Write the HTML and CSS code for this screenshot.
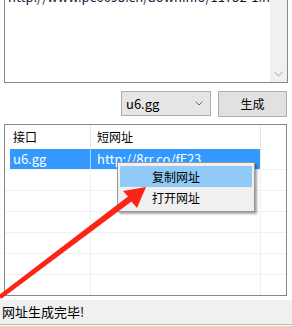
FILE: index.html
```html
<!DOCTYPE html>
<html lang="zh-CN">
<head>
  <meta charset="UTF-8">
  <meta name="viewport" content="width=device-width, initial-scale=1.0">
  <title>短网址生成</title>
  <link rel="stylesheet" href="styles.css">
</head>
<body>
  <div class="window">
    <!-- 长网址输入框 -->
    <div class="input-box">
      <div class="input-text">http://www.pc6693.cn/downinfo/11752-1.html</div>
      <div class="scrollbar">
        <div class="scroll-btn">
          <svg width="9" height="6" viewBox="0 0 9 6"><path d="M0.5 5 L4.5 1 L8.5 5" fill="none" stroke="#c2c2c2" stroke-width="1.2"/></svg>
        </div>
        <div class="scroll-btn">
          <svg width="9" height="6" viewBox="0 0 9 6"><path d="M0.5 1 L4.5 5 L8.5 1" fill="none" stroke="#c2c2c2" stroke-width="1.2"/></svg>
        </div>
      </div>
    </div>

    <!-- 接口选择 + 生成按钮 -->
    <div class="toolbar">
      <div class="combo">
        <span>u6.gg</span>
        <svg width="8" height="5" viewBox="0 0 8 5"><path d="M0.5 0.5 L4 4 L7.5 0.5" fill="none" stroke="#6d6d6d" stroke-width="1"/></svg>
      </div>
      <div class="button">生成</div>
    </div>

    <!-- 结果列表 -->
    <div class="list">
      <div class="list-header">
        <div class="cell c1">接口</div>
        <div class="cell c2">短网址</div>
        <div class="cell c3"></div>
      </div>
      <div class="row selected">
        <div class="cell c1">u6.gg</div>
        <div class="cell c2">http://8rr.co/fF23</div>
        <div class="cell c3"></div>
      </div>
      <div class="row"><div class="cell c1"></div><div class="cell c2"></div><div class="cell c3"></div></div>
      <div class="row"><div class="cell c1"></div><div class="cell c2"></div><div class="cell c3"></div></div>
      <div class="row"><div class="cell c1"></div><div class="cell c2"></div><div class="cell c3"></div></div>
      <div class="row"><div class="cell c1"></div><div class="cell c2"></div><div class="cell c3"></div></div>
      <div class="row"><div class="cell c1"></div><div class="cell c2"></div><div class="cell c3"></div></div>
      <div class="row"><div class="cell c1"></div><div class="cell c2"></div><div class="cell c3"></div></div>

      <!-- 右键菜单 -->
      <div class="context-menu">
        <div class="menu-item active">复制网址</div>
        <div class="menu-item">打开网址</div>
      </div>
    </div>

    <!-- 状态栏 -->
    <div class="status-bar">网址生成完毕!</div>

    <!-- 标注箭头 -->
    <svg class="arrow" width="292" height="326" viewBox="0 0 292 326">
      <polygon points="146,187 123,191 128,196.5 -1,295 1,299 131.5,201.5 137,208" fill="#fb2416"/>
    </svg>
  </div>
</body>
</html>
```

FILE: styles.css
```css
/* 基本样式 */
body {
  margin: 0;
  padding: 0;
  background-color: #FFF;
  font-family: "Noto Sans CJK SC", "Microsoft YaHei", sans-serif;
  font-size: 12px;
  color: #000;
  overflow: hidden;
}

.window {
  position: relative;
  width: 292px;
  height: 326px;
  overflow: hidden;
}

/* 输入框 */
.input-box {
  margin: -20px 4px 0 4px;
  height: 103px;
  box-sizing: border-box;
  border: 1px solid #828790;
  display: flex;
}

.input-text {
  flex: 1;
  padding: 8px 0 0 3px;
  line-height: 16px;
  font-size: 13px;
  white-space: nowrap;
  overflow: hidden;
  color: #1a1a40;
}

.scrollbar {
  width: 17px;
  background-color: #f0f0f0;
  display: flex;
  flex-direction: column;
  justify-content: space-between;
}

.scroll-btn {
  height: 17px;
  display: flex;
  align-items: center;
  justify-content: center;
}

/* 工具栏 */
.toolbar {
  display: flex;
  justify-content: flex-end;
  gap: 7px;
  margin: 8px 5px 0 0;
  height: 25px;
}

.combo {
  width: 90px;
  height: 25px;
  box-sizing: border-box;
  border: 1px solid #acacac;
  background-color: #e5e5e5;
  display: flex;
  align-items: center;
  justify-content: space-between;
  padding: 0 7px 0 4px;
  line-height: 16px;
  font-size: 13px;
}

.button {
  width: 69px;
  height: 26px;
  box-sizing: border-box;
  border: 1px solid #adadad;
  background-color: #e1e1e1;
  display: flex;
  align-items: center;
  justify-content: center;
  line-height: 16px;
}

/* 列表 */
.list {
  position: relative;
  margin: 8px 5px 0 4px;
  height: 172px;
  box-sizing: border-box;
  border: 1px solid #828790;
  overflow: hidden;
}

.list-header {
  display: flex;
  height: 24px;
  line-height: 24px;
}

.row {
  display: flex;
  height: 21px;
  line-height: 20px;
  box-sizing: border-box;
  border-bottom: 1px solid #f0f0f0;
}

.cell {
  box-sizing: border-box;
  border-right: 1px solid #f0f0f0;
  white-space: nowrap;
  overflow: hidden;
}

.list-header .cell {
  border-right-color: #e5e5e5;
}

.c1 {
  width: 86px;
  padding-left: 8px;
}

.c2 {
  width: 170px;
  padding-left: 6px;
}

.c3 {
  flex: 1;
  border-right: none;
}

.row.selected .c1,
.row.selected .c2 {
  background-color: #3399ff;
  color: #FFF;
  font-size: 13px;
}

.row.selected .c1 {
  width: 81px;
  margin-left: 5px;
  padding-left: 3px;
  border-right-color: #a9d3ff;
}

/* 右键菜单 */
.context-menu {
  position: absolute;
  top: 37px;
  left: 112px;
  width: 138px;
  height: 50px;
  box-sizing: border-box;
  border: 1px solid #979797;
  background-color: #f0f0f0;
  padding: 3px 2px;
  box-shadow: 2px 2px 2px rgba(0, 0, 0, 0.35);
}

.menu-item {
  height: 21px;
  line-height: 21px;
  padding-left: 32px;
}

.menu-item.active {
  background-color: #91c9f7;
}

/* 状态栏 */
.status-bar {
  margin-top: 4px;
  height: 25px;
  box-sizing: border-box;
  background-color: #f0f0f0;
  border-bottom: 1px solid #a8cf7c;
  padding-left: 2px;
  line-height: 24px;
  font-size: 13px;
}

/* 标注箭头 */
.arrow {
  position: absolute;
  top: 0;
  left: 0;
  pointer-events: none;
}
```
